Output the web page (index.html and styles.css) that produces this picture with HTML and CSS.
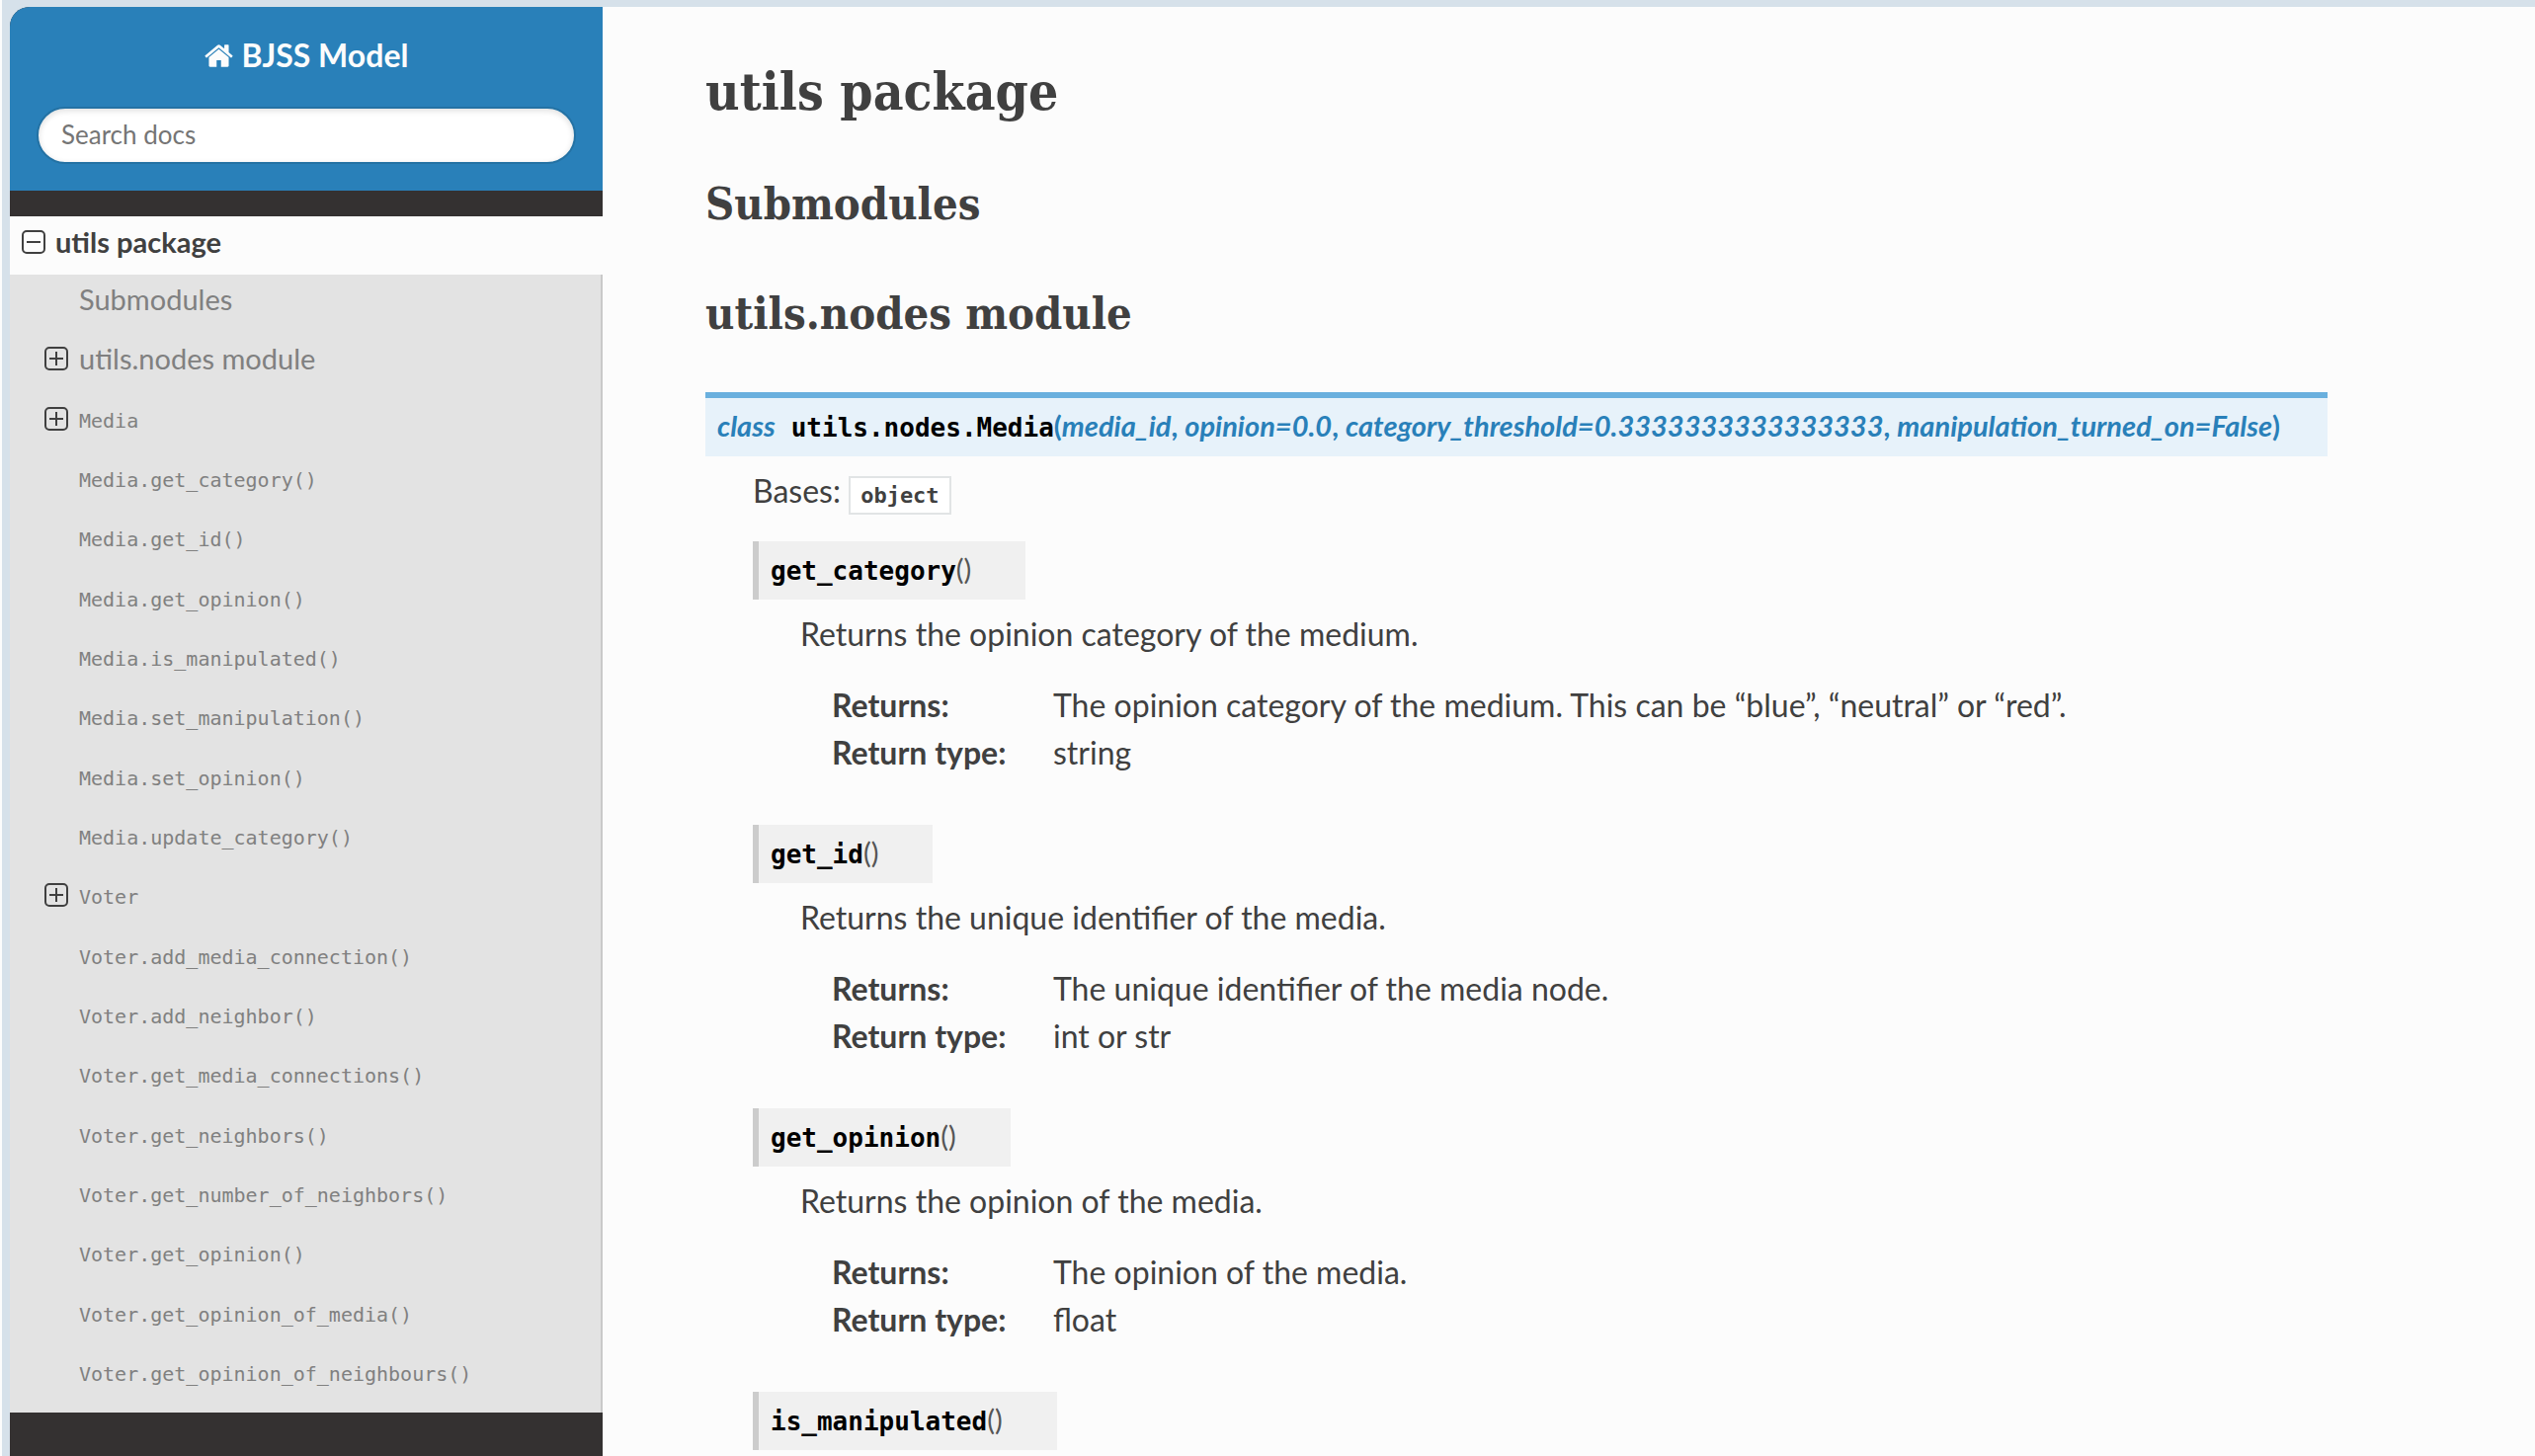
FILE: index.html
```html
<!DOCTYPE html>
<html lang="en">
<head>
<meta charset="utf-8">
<title>utils package — BJSS Model documentation</title>
<link rel="stylesheet" href="styles.css">
</head>
<body>
<svg class="sprite" aria-hidden="true">
  <symbol id="plus" viewBox="0 0 24 24"><rect x="1" y="1" width="22" height="22" rx="4"/><path d="M5 12h14M12 5v14"/></symbol>
  <symbol id="minus" viewBox="0 0 24 24"><rect x="1" y="1" width="22" height="22" rx="4"/><path d="M5 12h14"/></symbol>
</svg>
<div class="window">
  <aside class="sidebar">
    <header class="brand">
      <a class="brand-link" href="#"><svg class="home" viewBox="0 256 1664 1280" aria-hidden="true"><path d="M1408 992v480q0 26-19 45t-45 19h-384v-384h-256v384h-384q-26 0-45-19t-19-45v-480q0-1 .5-3t.5-3l575-474 575 474q1 2 1 6zm223-69l-62 74q-8 9-21 11h-3q-13 0-21-7l-692-577-692 577q-12 8-24 7-13-2-21-11l-62-74q-8-10-7-23.500t11-21.500l719-599q32-26 76-26t76 26l244 204v-195q0-14 9-23t23-9h192q14 0 23 9t9 23v408l219 182q10 8 11 21.500t-7 23.500z"/></svg>BJSS Model</a>
      <form role="search"><input class="search" type="text" placeholder="Search docs" aria-label="Search docs"></form>
    </header>
    <nav aria-label="Contents">
      <div class="current"><button class="toggle" aria-label="Collapse utils package"><svg><use href="#minus"/></svg></button><a href="#utils">utils package</a></div>
      <ul class="toc">
        <li><a href="#submodules">Submodules</a></li>
        <li><button class="toggle" aria-label="Expand utils.nodes module"><svg><use href="#plus"/></svg></button><a href="#nodes">utils.nodes module</a></li>
        <li><button class="toggle" aria-label="Expand Media"><svg><use href="#plus"/></svg></button><a href="#media"><code>Media</code></a></li>
        <li><a href="#get_category"><code>Media.get_category()</code></a></li>
        <li><a href="#get_id"><code>Media.get_id()</code></a></li>
        <li><a href="#get_opinion"><code>Media.get_opinion()</code></a></li>
        <li><a href="#is_manipulated"><code>Media.is_manipulated()</code></a></li>
        <li><a href="#"><code>Media.set_manipulation()</code></a></li>
        <li><a href="#"><code>Media.set_opinion()</code></a></li>
        <li><a href="#"><code>Media.update_category()</code></a></li>
        <li><button class="toggle" aria-label="Expand Voter"><svg><use href="#plus"/></svg></button><a href="#"><code>Voter</code></a></li>
        <li><a href="#"><code>Voter.add_media_connection()</code></a></li>
        <li><a href="#"><code>Voter.add_neighbor()</code></a></li>
        <li><a href="#"><code>Voter.get_media_connections()</code></a></li>
        <li><a href="#"><code>Voter.get_neighbors()</code></a></li>
        <li><a href="#"><code>Voter.get_number_of_neighbors()</code></a></li>
        <li><a href="#"><code>Voter.get_opinion()</code></a></li>
        <li><a href="#"><code>Voter.get_opinion_of_media()</code></a></li>
        <li><a href="#"><code>Voter.get_opinion_of_neighbours()</code></a></li>
      </ul>
    </nav>
  </aside>
  <main class="content">
    <h1 id="utils">utils package</h1>
    <h2 id="submodules">Submodules</h2>
    <h2 id="nodes">utils.nodes module</h2>
    <section class="class">
      <div class="class-sig" id="media"><em class="keyword">class</em><code>utils.nodes.Media</code>(<em>media_id</em>, <em>opinion=0.0</em>, <em>category_threshold=0.3333333333333333</em>, <em>manipulation_turned_on=False</em>)</div>
      <div class="class-body">
        <p class="bases">Bases: <code>object</code></p>
        <article class="method">
          <h3 class="sig" id="get_category"><code>get_category</code>()</h3>
          <p>Returns the opinion category of the medium.</p>
          <dl><dt>Returns:</dt><dd>The opinion category of the medium. This can be “blue”, “neutral” or “red”.</dd><dt>Return type:</dt><dd>string</dd></dl>
        </article>
        <article class="method">
          <h3 class="sig" id="get_id"><code>get_id</code>()</h3>
          <p>Returns the unique identifier of the media.</p>
          <dl><dt>Returns:</dt><dd>The unique identifier of the media node.</dd><dt>Return type:</dt><dd>int or str</dd></dl>
        </article>
        <article class="method">
          <h3 class="sig" id="get_opinion"><code>get_opinion</code>()</h3>
          <p>Returns the opinion of the media.</p>
          <dl><dt>Returns:</dt><dd>The opinion of the media.</dd><dt>Return type:</dt><dd>float</dd></dl>
        </article>
        <article class="method">
          <h3 class="sig" id="is_manipulated"><code>is_manipulated</code>()</h3>
        </article>
      </div>
    </section>
  </main>
</div>
</body>
</html>
```
FILE: styles.css
```css
* { box-sizing: border-box; }

body {
  margin: 0;
  background: #d6e1ea;
  border-left: 2px solid #fcfcfc;
  color: #404040;
  font: 32px/48px Lato, "Noto Sans", sans-serif;
}

h1, h2, h3, p, ul, dl, dd { margin: 0; padding: 0; }
a { color: inherit; text-decoration: none; }
code { font-family: "DejaVu Sans Mono", monospace; line-height: 1; }
.sprite { display: none; }

.window {
  display: flex;
  min-height: 100vh;
  padding: 7px 0 0 8px;
}

/* Sidebar */
.sidebar {
  flex: none;
  width: 600px;
  background: #343131;
  border-top-left-radius: 20px;
  overflow: hidden;
}

.brand {
  padding: 25px 27px 27px;
  margin-bottom: 26px;
  background: #2980b9;
  text-align: center;
}

.brand-link {
  display: flex;
  justify-content: center;
  align-items: center;
  gap: 9px;
  margin-bottom: 28px;
  color: #fcfcfc;
  font-weight: 700;
}

.home { width: 29px; height: 23px; fill: currentColor; }

.search {
  display: block;
  width: 100%;
  height: 58px;
  padding: 0 23px 2px;
  border: 2px solid #2472a4;
  border-radius: 29px;
  background: #fff;
  box-shadow: inset 0 2px 6px #ddd;
  font: 26px/32px Lato, sans-serif;
}
.search::placeholder { color: #757575; }

.current, .toc li {
  display: flex;
  align-items: center;
  font-size: 29px;
  line-height: 36px;
}

.current {
  gap: 10px;
  height: 59px;
  padding: 0 12px 8px;
  background: #fcfcfc;
  font-weight: 700;
}

.toggle {
  display: flex;
  padding: 0;
  border: 0;
  background: none;
  color: #404040;
}
.toggle svg { width: 24px; height: 24px; fill: none; stroke: #404040; stroke-width: 2; }

.toc {
  padding-bottom: 6px;
  border-right: 2px solid #c9c9c9;
  background: #e3e3e3;
  list-style: none;
  color: #808080;
}
.toc li {
  gap: 11px;
  height: 60px;
  padding: 0 35px 10px;
}
.toc li:nth-child(3n) { height: 61px; }
.toc a:first-child { margin-left: 35px; }
.toc code { display: block; padding-top: 4px; font-size: 20px; }

/* Content */
.content {
  flex: 1;
  min-width: 0;
  padding: 51px 210px 0 104px;
  background: #fcfcfc;
}

h1, h2 {
  font-family: "Roboto Slab", "DejaVu Serif Condensed", "DejaVu Serif", serif;
  font-weight: 700;
}
h1 { font-size: 53px; line-height: 68px; }
h2 { margin-top: 51px; font-size: 45px; line-height: 60px; }
.class { margin-top: 49px; }

.class-sig {
  padding: 10px 12px 13px;
  border-top: 6px solid #6ab0de;
  background: #e7f2fa;
  color: #2980b9;
  font-size: 29px;
  line-height: 36px;
  font-weight: 700;
}
.class-sig code, .sig code { color: #000; font-size: 26px; }
.keyword { margin-right: 16px; }

.class-body { padding: 11px 0 5px 48px; }
.bases { margin-bottom: 27px; }
.bases code {
  padding: 5px 10px;
  border: 2px solid #e1e4e5;
  background: #fff;
  font-size: 22px;
  font-weight: 700;
}

.sig {
  width: fit-content;
  padding: 10px 55px 13px 12px;
  border-left: 6px solid #ccc;
  background: #f0f0f0;
  color: #555;
  font-size: 29px;
  line-height: 36px;
  font-weight: 400;
}
.sig code { font-weight: 700; }

.method { margin-bottom: 37px; }
.method:last-child { margin-bottom: 0; }
.method p { margin: 11px 0 24px 48px; }
.method dl {
  display: grid;
  grid-template-columns: 224px 1fr;
  padding: 0 0 12px 80px;
}
dt { font-weight: 700; }
```
